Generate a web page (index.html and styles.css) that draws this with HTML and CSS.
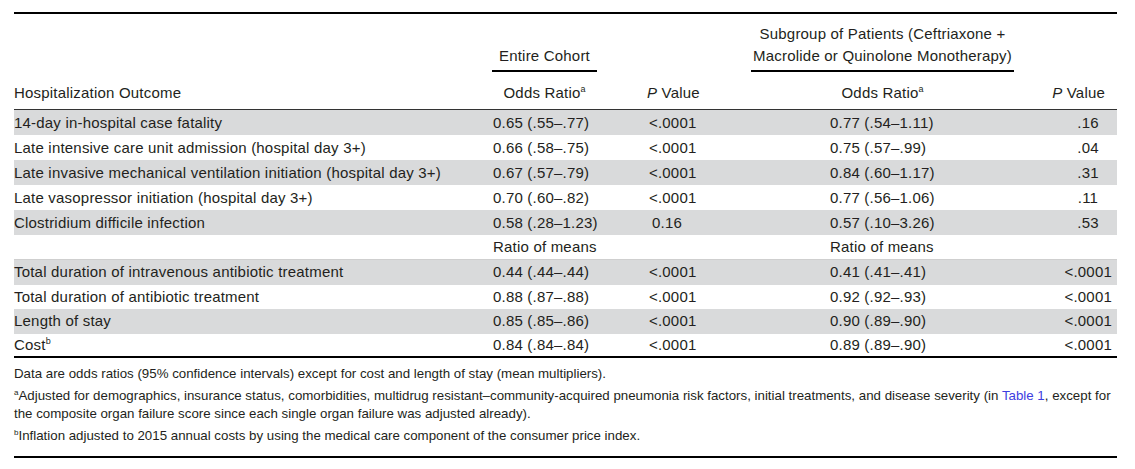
FILE: index.html
```html
<!DOCTYPE html>
<html lang="en">
<head>
<meta charset="utf-8">
<title>Hospitalization Outcomes</title>
<link rel="stylesheet" href="styles.css">
</head>
<body>
<div class="wrap">
<table class="tbl">
  <colgroup>
    <col class="c1"><col class="c2"><col class="c3"><col class="c4"><col class="c5">
  </colgroup>
  <thead>
    <tr class="grp">
      <th></th>
      <th class="under">Entire Cohort</th>
      <th></th>
      <th class="under">Subgroup of Patients (Ceftriaxone +<br>Macrolide or Quinolone Monotherapy)</th>
      <th></th>
    </tr>
    <tr class="sub">
      <th class="lbl">Hospitalization Outcome</th>
      <th class="ctr">Odds Ratio<sup>a</sup></th>
      <th class="p1"><i>P</i> Value</th>
      <th class="ctr">Odds Ratio<sup>a</sup></th>
      <th class="p2h"><i>P</i> Value</th>
    </tr>
  </thead>
  <tbody>
    <tr class="shade"><td>14-day in-hospital case fatality</td><td class="or1">0.65 (.55–.77)</td><td class="p1">&lt;.0001</td><td class="or2">0.77 (.54–1.11)</td><td class="p2">.16</td></tr>
    <tr><td>Late intensive care unit admission (hospital day 3+)</td><td class="or1">0.66 (.58–.75)</td><td class="p1">&lt;.0001</td><td class="or2">0.75 (.57–.99)</td><td class="p2">.04</td></tr>
    <tr class="shade"><td>Late invasive mechanical ventilation initiation (hospital day 3+)</td><td class="or1">0.67 (.57–.79)</td><td class="p1">&lt;.0001</td><td class="or2">0.84 (.60–1.17)</td><td class="p2">.31</td></tr>
    <tr><td>Late vasopressor initiation (hospital day 3+)</td><td class="or1">0.70 (.60–.82)</td><td class="p1">&lt;.0001</td><td class="or2">0.77 (.56–1.06)</td><td class="p2">.11</td></tr>
    <tr class="shade"><td>Clostridium difficile infection</td><td class="or1">0.58 (.28–1.23)</td><td class="p1 nudge">0.16</td><td class="or2">0.57 (.10–3.26)</td><td class="p2">.53</td></tr>
    <tr class="ratio"><td></td><td class="or1">Ratio of means</td><td></td><td class="or2">Ratio of means</td><td></td></tr>
    <tr class="shade b2"><td>Total duration of intravenous antibiotic treatment</td><td class="or1">0.44 (.44–.44)</td><td class="p1">&lt;.0001</td><td class="or2">0.41 (.41–.41)</td><td class="p2r">&lt;.0001</td></tr>
    <tr class="b2"><td>Total duration of antibiotic treatment</td><td class="or1">0.88 (.87–.88)</td><td class="p1">&lt;.0001</td><td class="or2">0.92 (.92–.93)</td><td class="p2r">&lt;.0001</td></tr>
    <tr class="shade b2"><td>Length of stay</td><td class="or1">0.85 (.85–.86)</td><td class="p1">&lt;.0001</td><td class="or2">0.90 (.89–.90)</td><td class="p2r">&lt;.0001</td></tr>
    <tr class="last"><td>Cost<sup>b</sup></td><td class="or1">0.84 (.84–.84)</td><td class="p1">&lt;.0001</td><td class="or2">0.89 (.89–.90)</td><td class="p2r">&lt;.0001</td></tr>
  </tbody>
</table>
<div class="notes">
  <p>Data are odds ratios (95% confidence intervals) except for cost and length of stay (mean multipliers).</p>
  <p><sup>a</sup>Adjusted for demographics, insurance status, comorbidities, multidrug resistant–community-acquired pneumonia risk factors, initial treatments, and disease severity (in <a class="ref" href="#">Table 1</a>, except for<br>the composite organ failure score since each single organ failure was adjusted already).</p>
  <p><sup>b</sup>Inflation adjusted to 2015 annual costs by using the medical care component of the consumer price index.</p>
</div>
</div>
</body>
</html>
```

FILE: styles.css
```css
html, body {
  margin: 0;
  padding: 0;
  background: #ffffff;
}

body {
  font-family: "Liberation Sans", Arial, Helvetica, sans-serif;
  color: #231f20;
}

.wrap {
  padding: 12px 0 0 14px;
  width: 1103px;
}

.tbl {
  width: 1103px;
  border-collapse: separate;
  border-spacing: 0;
  border-top: 2px solid #000;
  border-bottom: 2px solid #000;
  table-layout: fixed;
  font-size: 15px;
  letter-spacing: 0.2px;
}

.c1 { width: 478px; }
.c2 { width: 105px; }
.c3 { width: 154px; }
.c4 { width: 263px; }
.c5 { width: 103px; }

.tbl th {
  font-weight: normal;
  padding: 0;
  text-align: left;
}

.tbl sup {
  font-size: 9px;
  line-height: 0;
  vertical-align: 6px;
  letter-spacing: 0;
}

.grp th {
  vertical-align: bottom;
  line-height: 22px;
  padding-top: 9px;
  padding-bottom: 3px;
}

.grp th.under {
  text-align: center;
  border-bottom: 2px solid #000;
}

.sub th {
  line-height: 22px;
  padding-top: 10px;
  padding-bottom: 5px;
  border-bottom: 1px solid #333;
  vertical-align: bottom;
}

.sub th.ctr { text-align: center; }
.sub th.p1 { padding-left: 50px; }
.sub th.p2h { text-align: right; padding-right: 12px; }

.tbl td {
  padding: 0;
  height: 25px;
  line-height: 18px;
  vertical-align: middle;
  white-space: nowrap;
}

.tbl tr.shade td { background: #d9dadb; }

.tbl td.or1 { padding-left: 1px; }
.tbl td.or2 { padding-left: 79px; }
.tbl td.p1 { padding-left: 52px; }
.tbl td.p1.nudge { padding-left: 55px; }
.tbl td.p2 { text-align: center; padding-left: 45px; }
.tbl td.p2r { text-align: right; padding-right: 5px; }

.tbl tr.ratio td {
  height: 24px;
  border-bottom: 1px solid #cfcfcf;
}

.tbl tr.b2 td { height: 24.5px; }
.tbl tr.last td { height: 22px; }

.notes {
  font-size: 13.3px;
  line-height: 18px;
  padding: 7px 0 11px;
  border-bottom: 2px solid #000;
}

.notes p {
  margin: 0 0 4px;
}

.notes p:last-child { margin-bottom: 0; }

.notes sup {
  font-size: 8px;
  line-height: 0;
  vertical-align: 5px;
}

.ref {
  color: #3d3de0;
  text-decoration: none;
}
```
